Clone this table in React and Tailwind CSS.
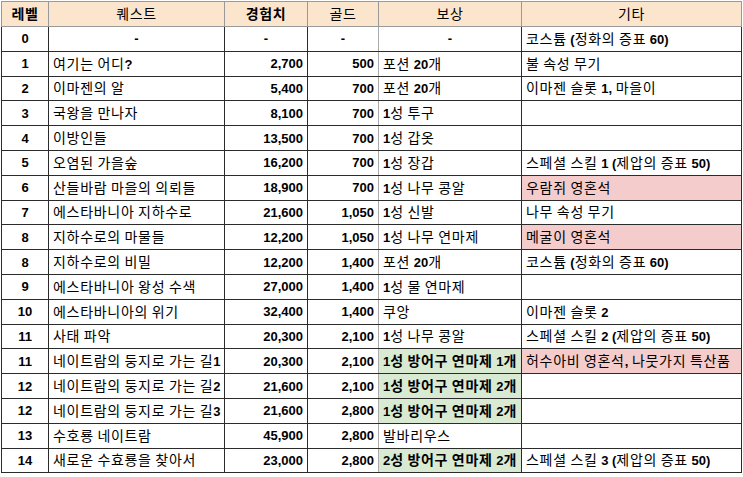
import React from 'react'

const rows = [
  ['0', '-', '-', '-', '-', '코스튬 (정화의 증표 60)'],
  ['1', '여기는 어디?', '2,700', '500', '포션 20개', '불 속성 무기'],
  ['2', '이마젠의 알', '5,400', '700', '포션 20개', '이마젠 슬롯 1, 마을이'],
  ['3', '국왕을 만나자', '8,100', '700', '1성 투구', ''],
  ['4', '이방인들', '13,500', '700', '1성 갑옷', ''],
  ['5', '오염된 가을숲', '16,200', '700', '1성 장갑', '스페셜 스킬 1 (제압의 증표 50)'],
  ['6', '산들바람 마을의 의뢰들', '18,900', '700', '1성 나무 콩알', '우람쥐 영혼석', { pink: true }],
  ['7', '에스타바니아 지하수로', '21,600', '1,050', '1성 신발', '나무 속성 무기'],
  ['8', '지하수로의 마물들', '12,200', '1,050', '1성 나무 연마제', '메굴이 영혼석', { pink: true }],
  ['8', '지하수로의 비밀', '12,200', '1,400', '포션 20개', '코스튬 (정화의 증표 60)'],
  ['9', '에스타바니아 왕성 수색', '27,000', '1,400', '1성 물 연마제', ''],
  ['10', '에스타바니아의 위기', '32,400', '1,400', '쿠앙', '이마젠 슬롯 2'],
  ['11', '사태 파악', '20,300', '2,100', '1성 나무 콩알', '스페셜 스킬 2 (제압의 증표 50)'],
  ['11', '네이트람의 둥지로 가는 길1', '20,300', '2,100', '1성 방어구 연마제 1개', '허수아비 영혼석, 나뭇가지 특산품', { green: true, pink: true }],
  ['12', '네이트람의 둥지로 가는 길2', '21,600', '2,100', '1성 방어구 연마제 2개', '', { green: true }],
  ['12', '네이트람의 둥지로 가는 길3', '21,600', '2,800', '1성 방어구 연마제 2개', '', { green: true }],
  ['13', '수호룡 네이트람', '45,900', '2,800', '발바리우스', ''],
  ['14', '새로운 수효룡을 찾아서', '23,000', '2,800', '2성 방어구 연마제 2개', '스페셜 스킬 3 (제압의 증표 50)', { green: true }],
]

// latin runs render bold (like the sheet's Arial), hangul stays regular unless the cell is bold
function Txt({ text, bold }) {
  const parts = text.match(/[\x00-\x7F]+|[^\x00-\x7F]+/g) || []
  return parts.map((p, i) =>
    /[\x00-\x7F]/.test(p[0]) ? (
      <span key={i} className="font-bold">{p}</span>
    ) : (
      <span key={i} className={`text-[14px] tracking-[0.7px] ${bold ? 'font-bold' : 'font-normal'}`}>{p}</span>
    )
  )
}

const cell = 'border border-[#2b2b2b] px-[4px] whitespace-nowrap overflow-hidden'

export default function App() {
  return (
    <div className="bg-white w-[743px] h-[477px] pl-[1px] pt-[1px] font-['Liberation_Sans','Noto_Sans_CJK_KR',sans-serif] text-[13px] text-black leading-none">
      <table className="table-fixed border-collapse w-[740px]">
        <colgroup>
          <col className="w-[47px]" />
          <col className="w-[176px]" />
          <col className="w-[83px]" />
          <col className="w-[71px]" />
          <col className="w-[143px]" />
          <col className="w-[220px]" />
        </colgroup>
        <thead>
          <tr className="h-[25px] bg-[#fce5cd]">
            <th className={`${cell} border-[#999] text-center font-bold`}><Txt text="레벨" bold /></th>
            <th className={`${cell} border-[#999] text-center font-normal`}><Txt text="퀘스트" /></th>
            <th className={`${cell} border-[#999] text-center font-bold`}><Txt text="경험치" bold /></th>
            <th className={`${cell} border-[#999] text-center font-normal`}><Txt text="골드" /></th>
            <th className={`${cell} border-[#999] text-center font-normal`}><Txt text="보상" /></th>
            <th className={`${cell} border-[#999] text-center font-normal`}><Txt text="기타" /></th>
          </tr>
        </thead>
        <tbody>
          {rows.map((r, i) => {
            const flags = r[6] || {}
            const first = i === 0
            return (
              <tr key={i} className="h-[24.8px]">
                <td className={`${cell} text-center font-bold`}>{r[0]}</td>
                <td className={`${cell} ${first ? 'text-center' : 'text-left'}`}>
                  <Txt text={r[1]} />
                </td>
                <td className={`${cell} ${first ? 'text-center' : 'text-right'}`}>
                  <Txt text={r[2]} />
                </td>
                <td className={`${cell} border-r-[#aaa] ${first ? 'text-center' : 'text-right'}`}>
                  <Txt text={r[3]} />
                </td>
                <td
                  className={`${cell} border-l-[#aaa] ${first ? 'text-center' : 'text-left'} ${
                    flags.green ? 'bg-[#d9ead3]' : ''
                  }`}
                >
                  <Txt text={r[4]} bold={flags.green} />
                </td>
                <td className={`${cell} text-left ${flags.pink ? 'bg-[#f4cccc]' : ''}`}>
                  <Txt text={r[5]} />
                </td>
              </tr>
            )
          })}
        </tbody>
      </table>
    </div>
  )
}
